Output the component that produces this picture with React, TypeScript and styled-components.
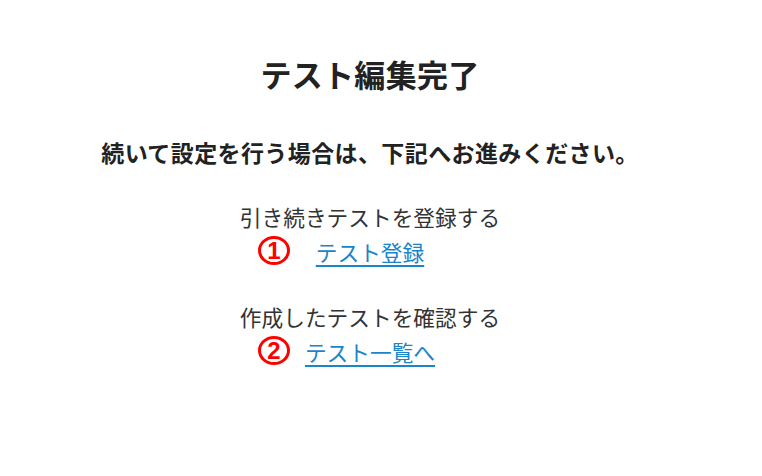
import styled, {createGlobalStyle} from "styled-components";

const GlobalStyle = createGlobalStyle`
    body {
        margin: 0;
        background: #fff;
        font-family: "Noto Sans CJK JP", "Noto Sans", sans-serif;
    }
`

const Page = styled.div`
    display: flex;
    flex-direction: column;
    align-items: center;
    padding-top: 51px;
    width: 740px;
`

const Title = styled.h1`
    margin: 0;
    font-size: 31px;
    font-weight: 700;
    color: #222;
    line-height: 46px;
    letter-spacing: 0.3px;
`

const Lead = styled.p`
    margin: 38px 0 0;
    font-size: 23px;
    font-weight: 700;
    color: #222;
    line-height: 34px;
    letter-spacing: 0.4px;
`

const Section = styled.div`
    display: flex;
    flex-direction: column;
    align-items: center;
    margin-top: 32px;
    & + & {
        margin-top: 33px;
    }
`

const Label = styled.div`
    font-size: 21.7px;
    color: #333;
    line-height: 32px;
`

const LinkRow = styled.div`
    position: relative;
    width: 100%;
    display: flex;
    justify-content: center;
    margin-top: 3px;
`

const TextLink = styled.a`
    font-size: 21.7px;
    line-height: 32px;
    color: #1a85c8;
    text-decoration: underline;
    text-underline-offset: 4px;
    cursor: pointer;
`

const Marker = styled.span`
    position: absolute;
    left: calc(50% - 112px);
    top: 0;
    box-sizing: border-box;
    width: 32px;
    height: 29px;
    border: 3px solid #f00;
    border-radius: 50%;
    display: flex;
    align-items: center;
    justify-content: center;
    font-family: "Liberation Sans", Arial, sans-serif;
    font-size: 24px;
    font-weight: 700;
    color: #f00;
    line-height: 1;
`

export default function App(){
    return(
        <>
            <GlobalStyle/>
            <Page>
                <Title>テスト編集完了</Title>
                <Lead>続いて設定を行う場合は、下記へお進みください。</Lead>
                <Section>
                    <Label>引き続きテストを登録する</Label>
                    <LinkRow>
                        <Marker>1</Marker>
                        <TextLink>テスト登録</TextLink>
                    </LinkRow>
                </Section>
                <Section>
                    <Label>作成したテストを確認する</Label>
                    <LinkRow>
                        <Marker>2</Marker>
                        <TextLink>テスト一覧へ</TextLink>
                    </LinkRow>
                </Section>
            </Page>
        </>
    )
}
